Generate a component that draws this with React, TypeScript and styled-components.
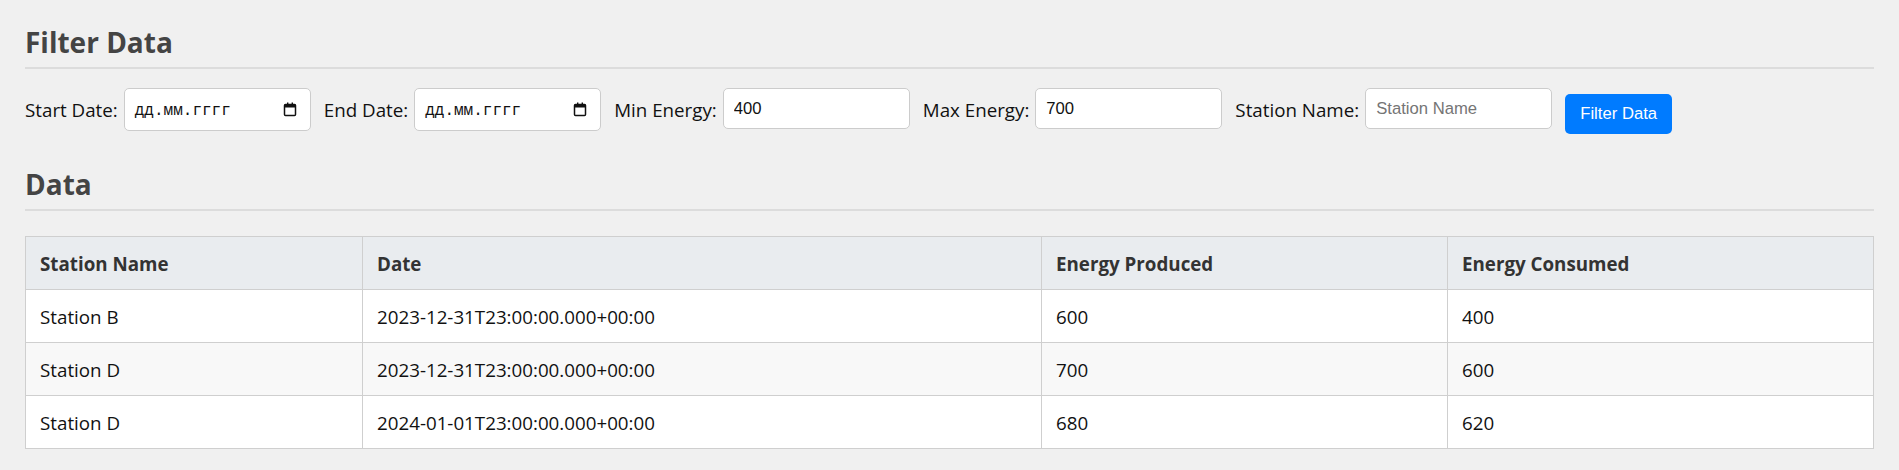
import React from "react";
import styled, { createGlobalStyle } from "styled-components";

const GlobalStyle = createGlobalStyle`
  html, body {
    margin: 0;
    padding: 0;
    background: #f0f0f0;
  }
  body {
    font-family: "Open Sans", "Noto Sans", sans-serif;
    color: #111;
  }
  * { box-sizing: border-box; }
`;

const Page = styled.div`
  padding: 24px 25px 0 25px;
`;

const Heading = styled.h2<{ $gap: number }>`
  margin: 0 0 ${(p) => p.$gap}px 0;
  padding-bottom: 7px;
  border-bottom: 2px solid #dcdcdc;
  font-family: "Open Sans", "Noto Sans", sans-serif;
  font-weight: 700;
  font-size: 28px;
  line-height: 36px;
  color: #444;
`;

const FilterRow = styled.div`
  display: flex;
  align-items: flex-start;
  margin-bottom: 32px;
`;

const Label = styled.label`
  font-size: 18.75px;
  line-height: 43px;
  height: 43px;
  margin-right: 6px;
  white-space: nowrap;
  color: #111;
`;

const FieldBox = styled.div`
  width: 187px;
  height: 43px;
  margin-right: 13px;
  padding: 0 13px 0 10px;
  background: #fff;
  border: 1px solid #ccc;
  border-radius: 5px;
  display: flex;
  align-items: center;
  justify-content: space-between;
`;

const DateText = styled.span`
  font-family: "Liberation Mono", "DejaVu Sans Mono", monospace;
  font-size: 16px;
  color: #111;
  padding-top: 2px;
`;

const TextInput = styled.input`
  width: 187px;
  height: 41px;
  margin-right: 13px;
  padding: 0 10px;
  background: #fff;
  border: 1px solid #ccc;
  border-radius: 5px;
  font-family: "Liberation Sans", Arial, sans-serif;
  font-size: 16.67px;
  color: #111;
  outline: none;
  &::placeholder {
    color: #757575;
  }
`;

const Button = styled.button`
  margin-top: 6px;
  width: 107px;
  height: 40px;
  padding: 0;
  background: #007bff;
  color: #fff;
  border: none;
  border-radius: 5px;
  font-family: "Liberation Sans", Arial, sans-serif;
  font-size: 16.67px;
  cursor: pointer;
`;

const Table = styled.table`
  width: 100%;
  border-collapse: collapse;
  table-layout: fixed;
  background: #fff;
  font-size: 18.75px;
`;

const Th = styled.th`
  text-align: left;
  font-weight: 700;
  color: #333;
  background: #e9ecef;
  border: 1px solid #cfcfcf;
  padding: 16px 14px 14px 14px;
  line-height: 22px;
`;

const Tr = styled.tr<{ $striped: boolean }>`
  background: ${(p) => (p.$striped ? "#f8f8f8" : "#fff")};
`;

const Td = styled.td`
  border: 1px solid #cfcfcf;
  padding: 16px 14px 14px 14px;
  line-height: 22px;
  color: #111;
`;

const CalendarIcon = () => (
  <svg width="14" height="15" viewBox="0 0 14 15" aria-hidden="true">
    <rect x="1.5" y="2.5" width="11" height="11" fill="none" stroke="#111" strokeWidth="1.5" rx="1" />
    <rect x="1.5" y="2.5" width="11" height="3" fill="#111" />
    <rect x="4" y="0.5" width="1.4" height="3" fill="#111" />
    <rect x="8.6" y="0.5" width="1.4" height="3" fill="#111" />
  </svg>
);

const DateField = () => (
  <FieldBox>
    <DateText>дд.мм.гггг</DateText>
    <CalendarIcon />
  </FieldBox>
);

const rows = [
  { name: "Station B", date: "2023-12-31T23:00:00.000+00:00", produced: 600, consumed: 400 },
  { name: "Station D", date: "2023-12-31T23:00:00.000+00:00", produced: 700, consumed: 600 },
  { name: "Station D", date: "2024-01-01T23:00:00.000+00:00", produced: 680, consumed: 620 },
];

export default function App() {
  return (
    <>
      <GlobalStyle />
      <Page>
        <Heading $gap={19}>Filter Data</Heading>
        <FilterRow>
          <Label>Start Date:</Label>
          <DateField />
          <Label>End Date:</Label>
          <DateField />
          <Label>Min Energy:</Label>
          <TextInput type="text" defaultValue="400" />
          <Label>Max Energy:</Label>
          <TextInput type="text" defaultValue="700" />
          <Label>Station Name:</Label>
          <TextInput type="text" placeholder="Station Name" />
          <Button>Filter Data</Button>
        </FilterRow>
        <Heading $gap={25}>Data</Heading>
        <Table>
          <colgroup>
            <col style={{ width: 337 }} />
            <col style={{ width: 679 }} />
            <col style={{ width: 406 }} />
            <col />
          </colgroup>
          <thead>
            <tr>
              <Th>Station Name</Th>
              <Th>Date</Th>
              <Th>Energy Produced</Th>
              <Th>Energy Consumed</Th>
            </tr>
          </thead>
          <tbody>
            {rows.map((r, i) => (
              <Tr key={i} $striped={i % 2 === 1}>
                <Td>{r.name}</Td>
                <Td>{r.date}</Td>
                <Td>{r.produced}</Td>
                <Td>{r.consumed}</Td>
              </Tr>
            ))}
          </tbody>
        </Table>
      </Page>
    </>
  );
}
